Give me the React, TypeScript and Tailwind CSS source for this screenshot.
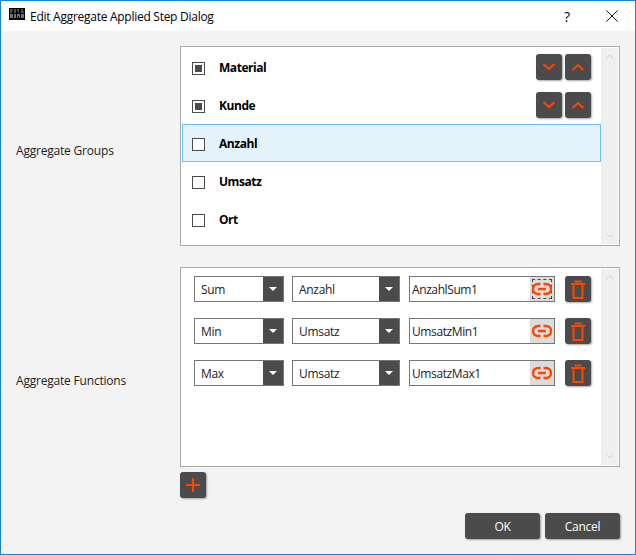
const ORANGE = '#ff4500';

const Chevron = ({ up }: { up?: boolean }) => (
  <svg width="14" height="8" viewBox="0 0 14 8" fill="none" stroke={ORANGE} strokeWidth="2">
    <path d={up ? 'M1.5 7L7 2l5.5 5' : 'M1.5 1L7 6l5.5-5'} />
  </svg>
);

const IconButton = ({ children }: { children: React.ReactNode }) => (
  <button className="flex size-[26px] shrink-0 items-center justify-center rounded-[3px] bg-[#4b4b4b] shadow-[1px_1px_2px_rgba(0,0,0,0.35)]">
    {children}
  </button>
);

const GroupRow = ({ label, checked, selected }: { label: string; checked?: boolean; selected?: boolean }) => (
  <div
    className={`flex h-[38px] items-center border px-[9px] ${
      selected ? 'border-[#6ec1ee] bg-[#e4f3fb]' : 'border-transparent'
    }`}>
    <div className="mt-[2px] flex size-[13px] items-center justify-center border border-[#4b4b4b] bg-white">
      {checked && <div className="size-[7px] bg-[#4b4b4b]" />}
    </div>
    <span className="mt-[2px] ml-[14px] text-[12px] font-bold tracking-[-0.45px] text-black">{label}</span>
    {checked && (
      <div className="ml-auto flex gap-[3px]">
        <IconButton>
          <Chevron />
        </IconButton>
        <IconButton>
          <Chevron up />
        </IconButton>
      </div>
    )}
  </div>
);

const Combo = ({ value, width }: { value: string; width: string }) => (
  <div className={`flex h-[26px] items-center border border-[#767676] bg-white ${width}`}>
    <span className="mt-[2px] flex-1 pl-[6px] text-[12px] tracking-[-0.3px] text-[#222]">{value}</span>
    <div className="flex h-full w-[20px] items-center justify-center bg-[#4b4b4b]">
      <div className="h-0 w-0 border-x-[4px] border-t-[4px] border-x-transparent border-t-white" />
    </div>
  </div>
);

const LinkIcon = () => (
  <svg width="20" height="14" viewBox="0 0 20 14" fill="none" stroke={ORANGE} strokeWidth="2.4" className="shrink-0">
    <path d="M8.5 2H6a5 5 0 0 0 0 10h2.5M11.5 2H14a5 5 0 0 1 0 10h-2.5M6 7h8" />
  </svg>
);

const TrashIcon = () => (
  <svg width="14" height="19" viewBox="0 0 14 19" fill="none" stroke={ORANGE} strokeWidth="2">
    <path d="M0 4h14M3.5 1.5h7M2.5 5v13h9V5" />
  </svg>
);

const FunctionRow = ({ fn, column, name, focused }: { fn: string; column: string; name: string; focused?: boolean }) => (
  <div className="flex h-[26px] items-center">
    <Combo value={fn} width="w-[90px]" />
    <div className="ml-[8px]">
      <Combo value={column} width="w-[108px]" />
    </div>
    <div className="ml-[9px] flex h-[26px] w-[146px] items-center border border-[#767676] bg-white">
      <span className="mt-[2px] flex-1 pl-[2px] text-[12px] tracking-[-0.4px] text-[#222]">{name}</span>
      <div className="flex h-full w-[24px] items-center justify-center bg-[#dcdcdc]">
        <div className={`flex size-[20px] shrink-0 items-center justify-center ${focused ? 'border border-dashed border-[#444]' : ''}`}>
          <LinkIcon />
        </div>
      </div>
    </div>
    <div className="ml-[10px]">
      <IconButton>
        <TrashIcon />
      </IconButton>
    </div>
  </div>
);

const Scrollbar = () => (
  <div className="flex w-[17px] shrink-0 flex-col items-center justify-between bg-[#efefef] py-[6px]">
    <svg width="8" height="5" viewBox="0 0 8 5" fill="none" stroke="#d4d4d4">
      <path d="M0.5 4.5L4 1l3.5 3.5" />
    </svg>
    <svg width="8" height="5" viewBox="0 0 8 5" fill="none" stroke="#d4d4d4">
      <path d="M0.5 0.5L4 4l3.5-3.5" />
    </svg>
  </div>
);

const DialogButton = ({ label }: { label: string }) => (
  <button className="h-[26px] w-[75px] rounded-[3px] bg-[#4b4b4b] pt-[2px] text-[12px] tracking-[-0.25px] text-white shadow-[1px_1px_2px_rgba(0,0,0,0.35)]">
    {label}
  </button>
);

// little app logo, just speckled rows on black
const AppLogo = () => (
  <svg width="16" height="12" viewBox="0 0 16 12" className="mb-[5px] shrink-0">
    <rect width="16" height="12" fill="#000" />
    <path d="M1 2h3M5 2h2M8 2h2M12 2h2M1 4h2M5 4h2M9 4h1M12 4h3" stroke="#9a9a9a" />
    <path d="M1 7h3M5 7h2M8 7h3M12 7h3M1 9h3M5 9h2M8 9h1M10 9h1M12 9h3" stroke="#e6e6e6" />
  </svg>
);

export default function App() {
  return (
    <div className="h-[555px] w-[636px] bg-white font-['Open_Sans','Liberation_Sans',sans-serif]">
      <div className="flex h-full w-full flex-col border border-[#1883d7]">
        <div className="flex h-[30px] shrink-0 items-center bg-white pl-[8px]">
          <AppLogo />
          <span className="mt-[2px] ml-[5px] text-[12px] tracking-[-0.27px] text-black">Edit Aggregate Applied Step Dialog</span>
          <span className="ml-auto text-[14px] text-black">?</span>
          <svg className="mr-[17px] ml-[36px]" width="12" height="12" viewBox="0 0 12 12" stroke="#111" strokeWidth="1">
            <path d="M0.5 0.5l11 11M11.5 0.5l-11 11" />
          </svg>
        </div>

        <div className="flex flex-1 flex-col bg-[#f3f3f3] pt-[15px] pr-[15px]">
          <div className="flex items-start">
            <div className="w-[179px] pt-[97px] pl-[15px] text-[12px] leading-[16px] tracking-[-0.2px] text-[#222]">Aggregate Groups</div>
            <div className="flex h-[200px] flex-1 border border-[#ababab] bg-white p-[1px]">
              <div className="flex-1">
                <GroupRow label="Material" checked />
                <GroupRow label="Kunde" checked />
                <GroupRow label="Anzahl" selected />
                <GroupRow label="Umsatz" />
                <GroupRow label="Ort" />
              </div>
              <Scrollbar />
            </div>
          </div>

          <div className="mt-[21px] flex items-start">
            <div className="w-[179px] pt-[106px] pl-[15px] text-[12px] leading-[16px] tracking-[-0.2px] text-[#222]">Aggregate Functions</div>
            <div className="flex h-[200px] flex-1 border border-[#ababab] bg-white p-[1px]">
              <div className="flex flex-1 flex-col gap-[16px] pt-[7px] pl-[12px]">
                <FunctionRow fn="Sum" column="Anzahl" name="AnzahlSum1" focused />
                <FunctionRow fn="Min" column="Umsatz" name="UmsatzMin1" />
                <FunctionRow fn="Max" column="Umsatz" name="UmsatzMax1" />
              </div>
              <Scrollbar />
            </div>
          </div>

          <div className="mt-[5px] pl-[179px]">
            <IconButton>
              <svg width="16" height="16" viewBox="0 0 16 16" stroke={ORANGE} strokeWidth="2">
                <path d="M8 1v14M1 8h14" />
              </svg>
            </IconButton>
          </div>

          <div className="mt-[15px] flex justify-end gap-[5px]">
            <DialogButton label="OK" />
            <DialogButton label="Cancel" />
          </div>
        </div>
      </div>
    </div>
  );
}
